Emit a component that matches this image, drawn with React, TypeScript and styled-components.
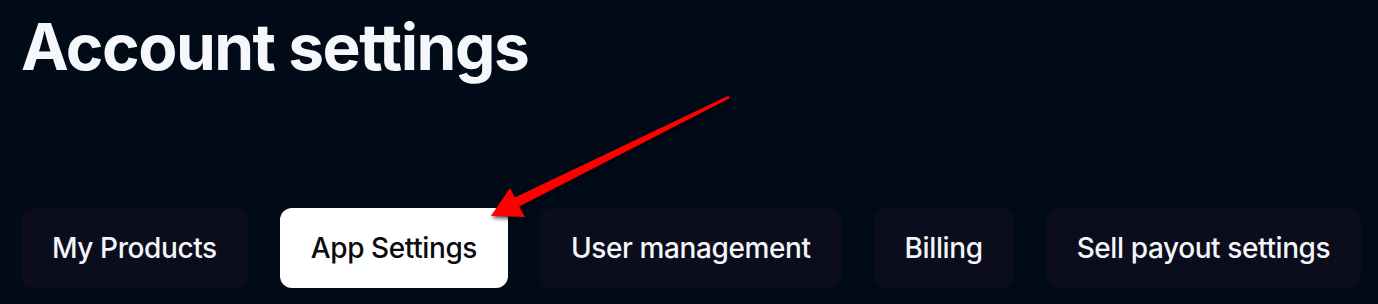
import styled, { createGlobalStyle } from 'styled-components';

const tabs = ['My Products', 'App Settings', 'User management', 'Billing', 'Sell payout settings'];
const activeTab = 'App Settings';

const GlobalStyle = createGlobalStyle`
  html, body {
    margin: 0;
    padding: 0;
    background: #010a17;
  }
  body {
    font-family: Inter, "Noto Sans", sans-serif;
  }
`;

const Page = styled.div`
  position: relative;
  width: 1378px;
  height: 304px;
  padding: 0 21px;
  box-sizing: border-box;
  overflow: hidden;
`;

const Title = styled.h1`
  margin: 8px 0 0 0;
  font-size: 64px;
  line-height: 78px;
  font-weight: 700;
  letter-spacing: -1.5px;
  color: #f5f7fa;
`;

const TabRow = styled.nav`
  display: flex;
  gap: 32px;
  margin-top: 122px;
`;

const Tab = styled.button<{ $active?: boolean }>`
  flex-shrink: 0;
  height: 80px;
  padding: 0 31px;
  border: none;
  border-radius: 12px;
  display: flex;
  align-items: center;
  justify-content: center;
  white-space: nowrap;
  font-family: inherit;
  font-size: 28px;
  font-weight: 500;
  letter-spacing: -0.4px;
  background: ${(p) => (p.$active ? '#ffffff' : '#0b0d1d')};
  color: ${(p) => (p.$active ? '#0a0a0f' : '#f4f5f8')};
  cursor: pointer;
`;

const Arrow = styled.svg`
  position: absolute;
  left: 0;
  top: 0;
  pointer-events: none;
  filter: drop-shadow(1px 2px 2px rgba(0, 0, 0, 0.7));
`;

export default function App() {
  return (
    <>
      <GlobalStyle />
      <Page>
        <Title>Account settings</Title>
        <TabRow>
          {tabs.map((t) => (
            <Tab key={t} $active={t === activeTab}>
              {t}
            </Tab>
          ))}
        </TabRow>
        <Arrow width="1378" height="304" viewBox="0 0 1378 304">
          <polygon
            points="728.3,95.7 514.8,197.5 510,188 491,216 525,217 519.2,206.5 729.7,98.3"
            fill="#ff0000"
          />
        </Arrow>
      </Page>
    </>
  );
}
